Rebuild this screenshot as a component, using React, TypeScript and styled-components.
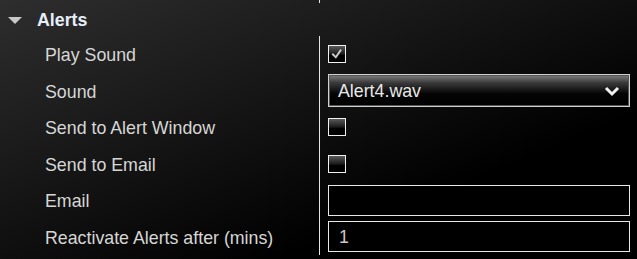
import React from 'react';
import styled, {createGlobalStyle} from "styled-components";

const GlobalStyle = createGlobalStyle`
    html, body {
        margin: 0;
        padding: 0;
        height: 100%;
    }
    body {
        background: linear-gradient(to bottom right, #2e2e2e 0%, #161616 38%, #000 72%);
        font-family: "Liberation Sans", Arial, sans-serif;
        overflow: hidden;
    }
`

type rowType = {
    label: string
    children?: React.ReactNode
}

const PropertyRow = (props: rowType) => {
    return (
        <Row>
            <Label>{props.label}</Label>
            <Cell>{props.children}</Cell>
        </Row>
    )
}

const Check = (props: {checked?: boolean}) => {
    return (
        <CheckBox>
            {props.checked && (
                <svg width="14" height="14" viewBox="0 0 14 14">
                    <path d="M3 7.5 L5.8 10.2 L10.5 3.5" fill="none" stroke="#c8c8c8" strokeWidth="2"
                          strokeLinecap="square"/>
                </svg>
            )}
        </CheckBox>
    )
}

export default function App() {
    return (
        <>
            <GlobalStyle/>
            <Grid>
                <StubRow>
                    <StubLabel/>
                    <Cell/>
                </StubRow>
                <Header>
                    <Arrow/>
                    <HeaderTitle>Alerts</HeaderTitle>
                </Header>
                <PropertyRow label="Play Sound"><Check checked/></PropertyRow>
                <PropertyRow label="Sound">
                    <Select>
                        <span>Alert4.wav</span>
                        <svg width="16" height="11" viewBox="0 0 16 11">
                            <polyline points="2,2 8,8 14,2" fill="none" stroke="#f0f0f0" strokeWidth="3"/>
                        </svg>
                    </Select>
                </PropertyRow>
                <PropertyRow label="Send to Alert Window"><Check/></PropertyRow>
                <PropertyRow label="Send to Email"><Check/></PropertyRow>
                <PropertyRow label="Email"><TextBox/></PropertyRow>
                <PropertyRow label="Reactivate Alerts after (mins)"><TextBox>1</TextBox></PropertyRow>
            </Grid>
        </>
    );
}

const Grid = styled.div`
    width: 637px;
    display: flex;
    flex-direction: column;
`
const Row = styled.div`
    display: grid;
    grid-template-columns: 319px 1fr;
    height: 36.5px;
`
const StubRow = styled(Row)`
    height: 3px;
`
const StubLabel = styled.div``
const Label = styled.div`
    padding-left: 45px;
    display: flex;
    align-items: center;
    font-size: 17.8px;
    color: #d6d6d6;
    padding-top: 3px;
`
const Cell = styled.div`
    border-left: 1px solid #e4e4e4;
    padding: 0 7px 0 8px;
    display: flex;
    align-items: center;
`
const Header = styled.div`
    height: 32px;
    display: flex;
    align-items: center;
    padding-left: 8px;
    padding-top: 1px;
`
const Arrow = styled.div`
    width: 0;
    height: 0;
    border-left: 7px solid transparent;
    border-right: 7px solid transparent;
    border-top: 7px solid #c8c8c8;
    margin-right: 15px;
`
const HeaderTitle = styled.span`
    font-size: 17.8px;
    font-weight: 700;
    color: #e6eef8;
`
const CheckBox = styled.div`
    width: 16px;
    height: 16px;
    border: 1px solid #f0f0f0;
    background: linear-gradient(to bottom, #5a5a5a 0%, #1a1a1a 50%, #000 60%);
    display: flex;
    align-items: center;
    justify-content: center;
`
const Select = styled.div`
    box-sizing: border-box;
    width: 302px;
    height: 33px;
    border: 1px solid #d0d0d0;
    box-shadow: inset 0 0 0 1px #555;
    background: linear-gradient(to bottom, #808080 0%, #3a3a3a 25%, #050505 60%, #000 100%);
    display: flex;
    align-items: center;
    justify-content: space-between;
    padding: 1px 9px 0 9px;
    font-size: 17.8px;
    color: #e8e8e8;
`
const TextBox = styled.div`
    box-sizing: border-box;
    width: 302px;
    height: 31px;
    border: 1px solid #e8e8e8;
    background: #000;
    display: flex;
    align-items: center;
    padding-left: 10px;
    padding-top: 1px;
    font-size: 17.8px;
    color: #c8c8c8;
`
